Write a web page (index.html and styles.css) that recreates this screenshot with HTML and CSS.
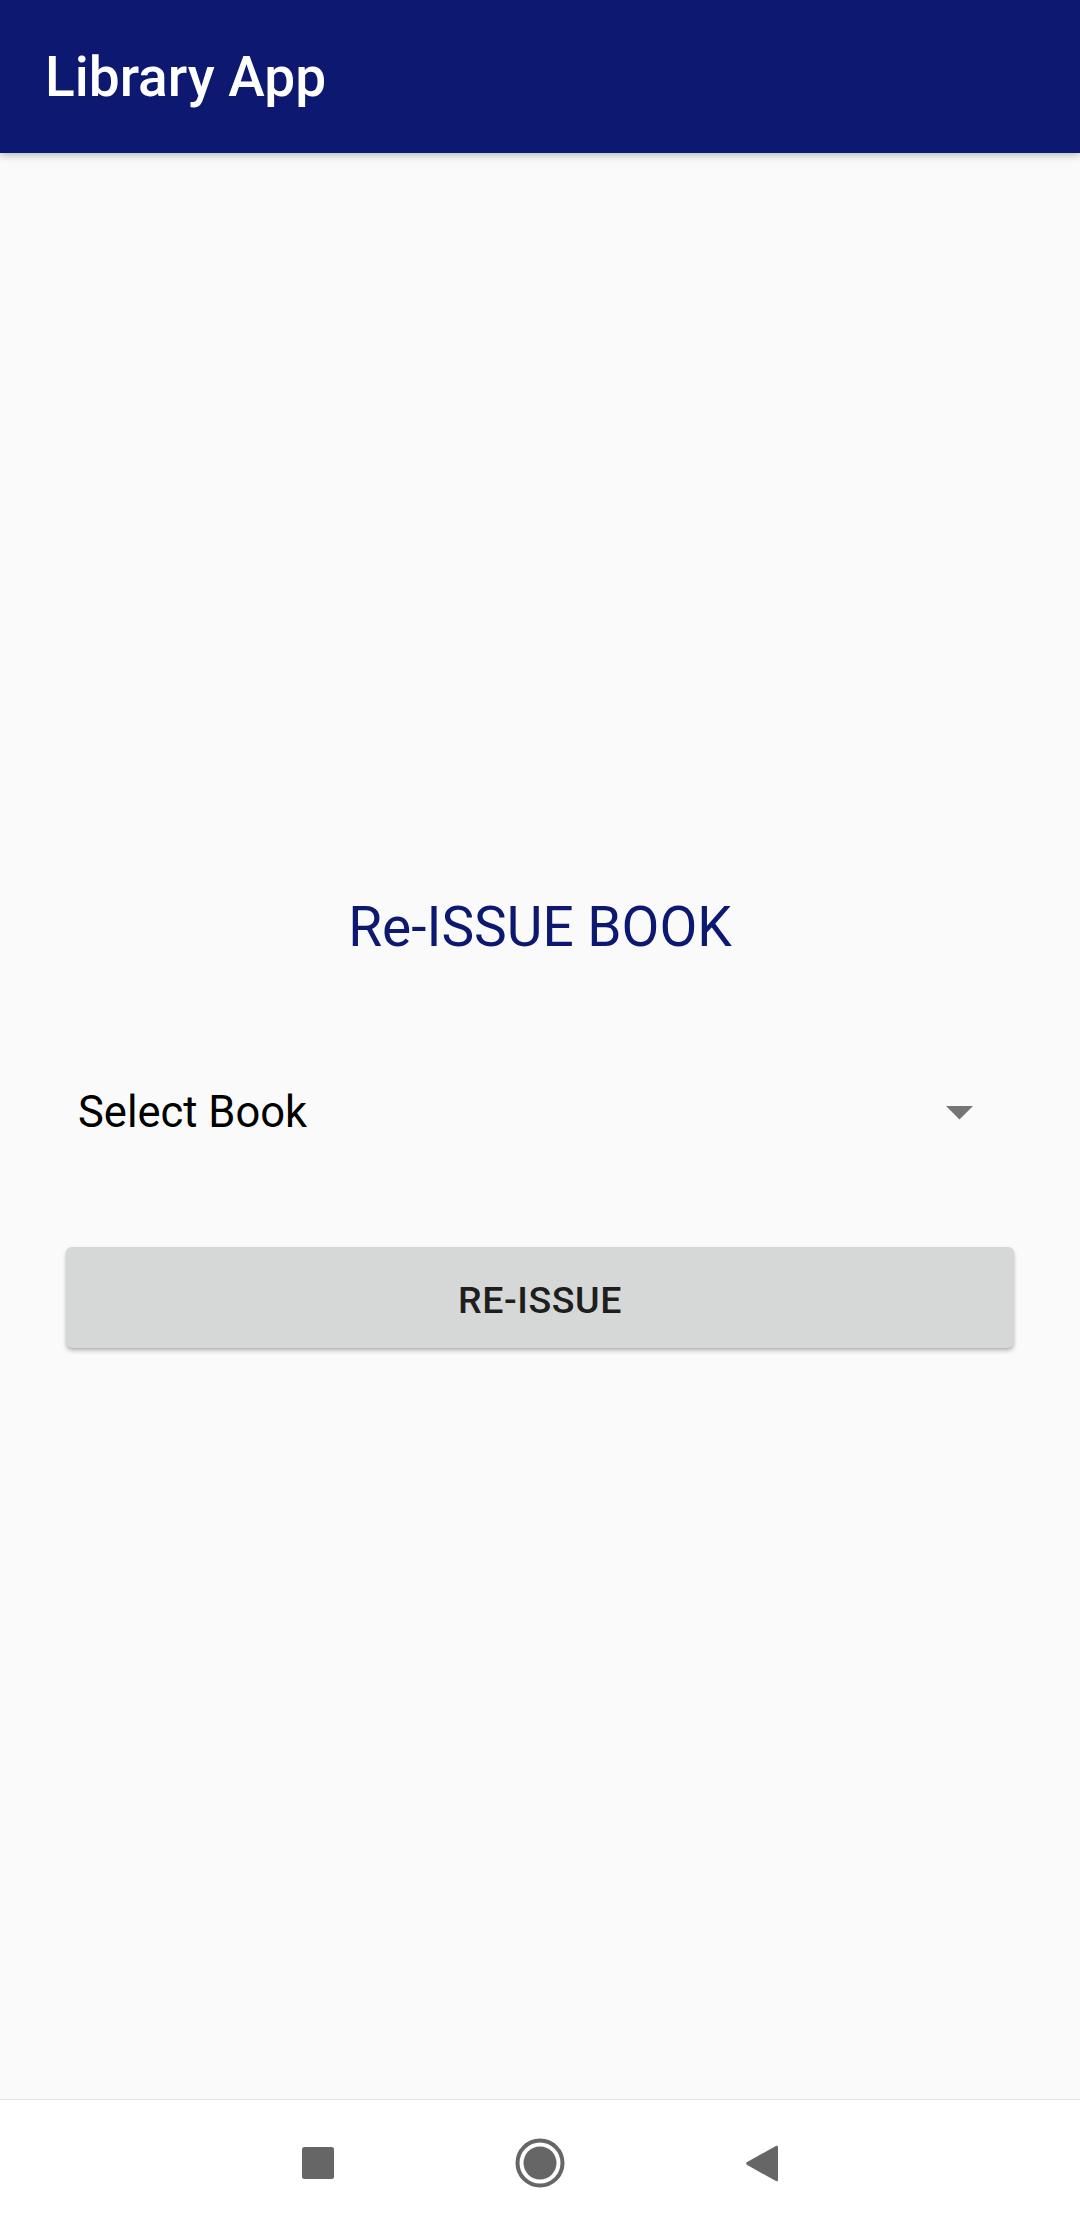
FILE: index.html
```html
<!DOCTYPE html>
<html>
<head>
<meta charset="utf-8">
<link rel="stylesheet" href="styles.css">
</head>
<body>
<div class="screen">
  <header class="appbar"><span class="appbar-title">Library App</span></header>
  <main class="content">
    <h1 class="title">Re-ISSUE BOOK</h1>
    <div class="spinner">
      <span class="spinner-text">Select Book</span>
      <svg class="spinner-arrow" width="27" height="14" viewBox="0 0 27 14"><path d="M0 0 H27 L13.5 13.5 Z" fill="#757575"/></svg>
    </div>
    <button class="btn">RE-ISSUE</button>
  </main>
  <nav class="navbar">
    <div class="nav-slot">
      <svg width="32" height="32" viewBox="0 0 32 32"><rect x="0" y="0" width="32" height="32" rx="2.5" fill="#666666"/></svg>
    </div>
    <div class="nav-slot">
      <svg width="50" height="50" viewBox="0 0 50 50"><circle cx="25" cy="25" r="22.5" fill="none" stroke="#666666" stroke-width="4"/><circle cx="25" cy="25" r="16.5" fill="#666666"/></svg>
    </div>
    <div class="nav-slot">
      <svg width="32" height="37" viewBox="0 0 32 37"><path d="M29.5 1.2 C31 0.4 32 1 32 2.6 V34.4 C32 36 31 36.6 29.5 35.8 L1.2 20 C-0.2 19.2 -0.2 17.8 1.2 17 Z" fill="#666666"/></svg>
    </div>
  </nav>
</div>
</body>
</html>
```
FILE: styles.css
```css
html, body {
  margin: 0;
  padding: 0;
}
body {
  background: #fafafa;
  font-family: Roboto, "Liberation Sans", sans-serif;
}
.screen {
  display: flex;
  flex-direction: column;
  height: 2226px;
  width: 1080px;
  overflow: hidden;
}
.appbar {
  height: 153px;
  flex: none;
  background: #0d1870;
  display: flex;
  align-items: center;
  padding-left: 45px;
  box-shadow: 0 2px 8px rgba(0, 0, 0, 0.28);
  position: relative;
  z-index: 1;
}
.appbar-title {
  color: #ffffff;
  font-size: 55px;
  font-weight: 500;
  line-height: 1;
  margin-top: 2px;
}
.content {
  flex: 1;
  display: flex;
  flex-direction: column;
  align-items: stretch;
}
.title {
  margin: 742px 0 0 0;
  text-align: center;
  font-size: 55px;
  font-weight: 400;
  color: #0d1870;
  line-height: normal;
}
.spinner {
  margin: 128px 107px 0 78px;
  display: flex;
  align-items: center;
  justify-content: space-between;
}
.spinner-text {
  font-size: 43.5px;
  color: #000000;
  line-height: normal;
}
.spinner-arrow {
  display: block;
}
.btn {
  margin: 109px 66px 0 66px;
  height: 101px;
  border: none;
  border-radius: 6px;
  background: #d6d7d7;
  color: #1e1e1e;
  font-family: Roboto, "Liberation Sans", sans-serif;
  font-size: 37.5px;
  font-weight: 500;
  letter-spacing: 0.6px;
  box-shadow: 0 3px 4px rgba(0, 0, 0, 0.22), 0 1px 2px rgba(0, 0, 0, 0.1);
  padding: 4px 0 0 0;
}
.navbar {
  flex: none;
  height: 126px;
  background: #ffffff;
  border-top: 1px solid #e2e2e2;
  display: flex;
  justify-content: center;
  align-items: center;
}
.nav-slot {
  width: 222px;
  display: flex;
  justify-content: center;
  align-items: center;
}
.nav-slot svg {
  display: block;
}
```
